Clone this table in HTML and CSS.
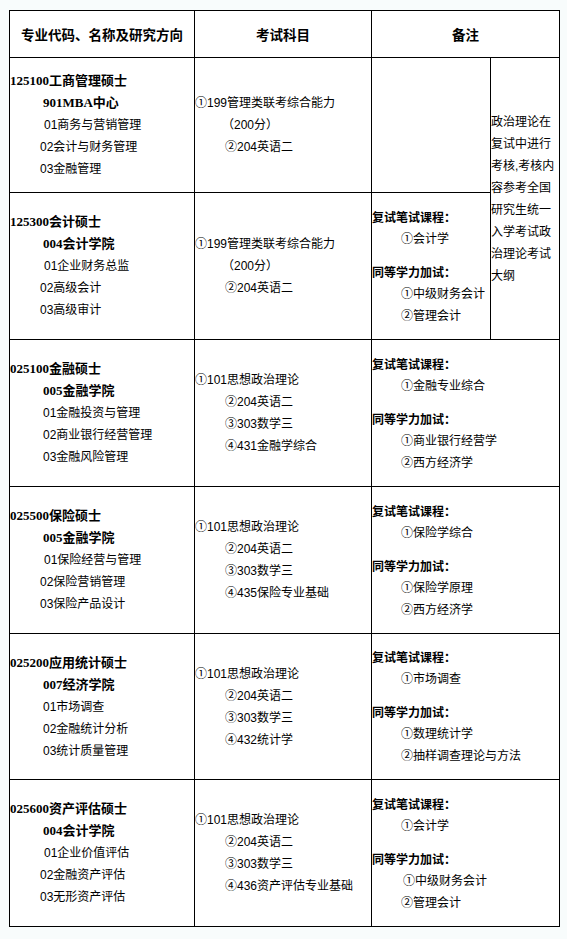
FILE: index.html
```html
<!DOCTYPE html>
<html lang="zh-CN">
<head>
<meta charset="utf-8">
<title>专业目录</title>
<link rel="stylesheet" href="styles.css">
</head>
<body>
<table class="grid">
  <colgroup>
    <col class="c1"><col class="c2"><col class="c3"><col class="c4">
  </colgroup>
  <tr class="head">
    <th>专业代码、名称及研究方向</th>
    <th>考试科目</th>
    <th colspan="2">备注</th>
  </tr>
  <tr class="r1">
    <td>
      <div class="t">125100工商管理硕士</div>
      <div class="t i42">901MBA中心</div>
      <div class="i43">01商务与营销管理</div>
      <div class="i39">02会计与财务管理</div>
      <div class="i39">03金融管理</div>
    </td>
    <td>
      <div>①199管理类联考综合能力</div>
      <div class="i28">（200分）</div>
      <div class="i30">②204英语二</div>
    </td>
    <td></td>
    <td rowspan="2" class="note">
      <div>政治理论在</div>
      <div>复试中进行</div>
      <div>考核,考核内</div>
      <div>容参考全国</div>
      <div>研究生统一</div>
      <div>入学考试政</div>
      <div>治理论考试</div>
      <div>大纲</div>
    </td>
  </tr>
  <tr class="r2">
    <td>
      <div class="t">125300会计硕士</div>
      <div class="t i42">004会计学院</div>
      <div class="i43">01企业财务总监</div>
      <div class="i39">02高级会计</div>
      <div class="i39">03高级审计</div>
    </td>
    <td>
      <div>①199管理类联考综合能力</div>
      <div class="i28">（200分）</div>
      <div class="i30">②204英语二</div>
    </td>
    <td>
      <div class="b">复试笔试课程：</div>
      <div class="i29">①会计学</div>
      <div class="b gap">同等学力加试：</div>
      <div class="i29">①中级财务会计</div>
      <div class="i29">②管理会计</div>
    </td>
  </tr>
  <tr class="r3">
    <td>
      <div class="t">025100金融硕士</div>
      <div class="t i42">005金融学院</div>
      <div class="i42">01金融投资与管理</div>
      <div class="i42">02商业银行经营管理</div>
      <div class="i42">03金融风险管理</div>
    </td>
    <td>
      <div>①101思想政治理论</div>
      <div class="i30">②204英语二</div>
      <div class="i30">③303数学三</div>
      <div class="i30">④431金融学综合</div>
    </td>
    <td colspan="2">
      <div class="b">复试笔试课程：</div>
      <div class="i29">①金融专业综合</div>
      <div class="b gap">同等学力加试：</div>
      <div class="i29">①商业银行经营学</div>
      <div class="i29">②西方经济学</div>
    </td>
  </tr>
  <tr class="r4">
    <td>
      <div class="t">025500保险硕士</div>
      <div class="t i42">005金融学院</div>
      <div class="i43">01保险经营与管理</div>
      <div class="i39">02保险营销管理</div>
      <div class="i39">03保险产品设计</div>
    </td>
    <td>
      <div>①101思想政治理论</div>
      <div class="i30">②204英语二</div>
      <div class="i30">③303数学三</div>
      <div class="i30">④435保险专业基础</div>
    </td>
    <td colspan="2">
      <div class="b">复试笔试课程：</div>
      <div class="i29">①保险学综合</div>
      <div class="b gap">同等学力加试：</div>
      <div class="i29">①保险学原理</div>
      <div class="i29">②西方经济学</div>
    </td>
  </tr>
  <tr class="r5">
    <td>
      <div class="t">025200应用统计硕士</div>
      <div class="t i42">007经济学院</div>
      <div class="i42">01市场调查</div>
      <div class="i42">02金融统计分析</div>
      <div class="i42">03统计质量管理</div>
    </td>
    <td>
      <div>①101思想政治理论</div>
      <div class="i30">②204英语二</div>
      <div class="i30">③303数学三</div>
      <div class="i30">④432统计学</div>
    </td>
    <td colspan="2">
      <div class="b">复试笔试课程：</div>
      <div class="i29">①市场调查</div>
      <div class="b gap">同等学力加试：</div>
      <div class="i29">①数理统计学</div>
      <div class="i29">②抽样调查理论与方法</div>
    </td>
  </tr>
  <tr class="r6">
    <td>
      <div class="t">025600资产评估硕士</div>
      <div class="t i42">004会计学院</div>
      <div class="i43">01企业价值评估</div>
      <div class="i39">02金融资产评估</div>
      <div class="i39">03无形资产评估</div>
    </td>
    <td>
      <div>①101思想政治理论</div>
      <div class="i30">②204英语二</div>
      <div class="i30">③303数学三</div>
      <div class="i30">④436资产评估专业基础</div>
    </td>
    <td colspan="2">
      <div class="b">复试笔试课程：</div>
      <div class="i29">①会计学</div>
      <div class="b gap">同等学力加试：</div>
      <div class="i31">①中级财务会计</div>
      <div class="i29">②管理会计</div>
    </td>
  </tr>
</table>
</body>
</html>
```
FILE: styles.css
```css
html, body {
  margin: 0;
  padding: 0;
  background: #f8fcfc;
}
body {
  padding: 10px 0 0 9px;
  font-family: "Liberation Sans", "Noto Sans CJK SC", sans-serif;
  font-size: 12px;
  color: #000;
}
.grid {
  border-collapse: collapse;
  table-layout: fixed;
  width: 550px;
  background: #fff;
}
.c1 { width: 185px; }
.c2 { width: 177px; }
.c3 { width: 119px; }
.c4 { width: 69px; }
.grid th, .grid td {
  border: 1px solid #000;
  padding: 0;
  vertical-align: middle;
  text-align: left;
  line-height: 22px;
  white-space: nowrap;
}
.grid th {
  text-align: center;
  font-family: "Noto Sans CJK SC", sans-serif;
  font-weight: bold;
  font-size: 13.5px;
}
.head { height: 47px; }
.r1 { height: 135px; }
.r2 { height: 147px; }
.r3 { height: 147px; }
.r4 { height: 147px; }
.r5 { height: 146px; }
.r6 { height: 147px; }
.t {
  font-family: "Liberation Serif", "Noto Sans CJK SC", serif;
  font-weight: bold;
  font-size: 13px;
}
.b {
  font-family: "Noto Sans CJK SC", sans-serif;
  font-weight: bold;
}
.gap { margin-top: 11px; }
.i28 { padding-left: 27px; }
.i29 { padding-left: 29px; }
.i30 { padding-left: 30px; }
.i31 { padding-left: 31px; }
.i39 { padding-left: 30px; }
.i42 { padding-left: 33px; }
.i43 { padding-left: 34px; }
.note { white-space: normal; }
```
